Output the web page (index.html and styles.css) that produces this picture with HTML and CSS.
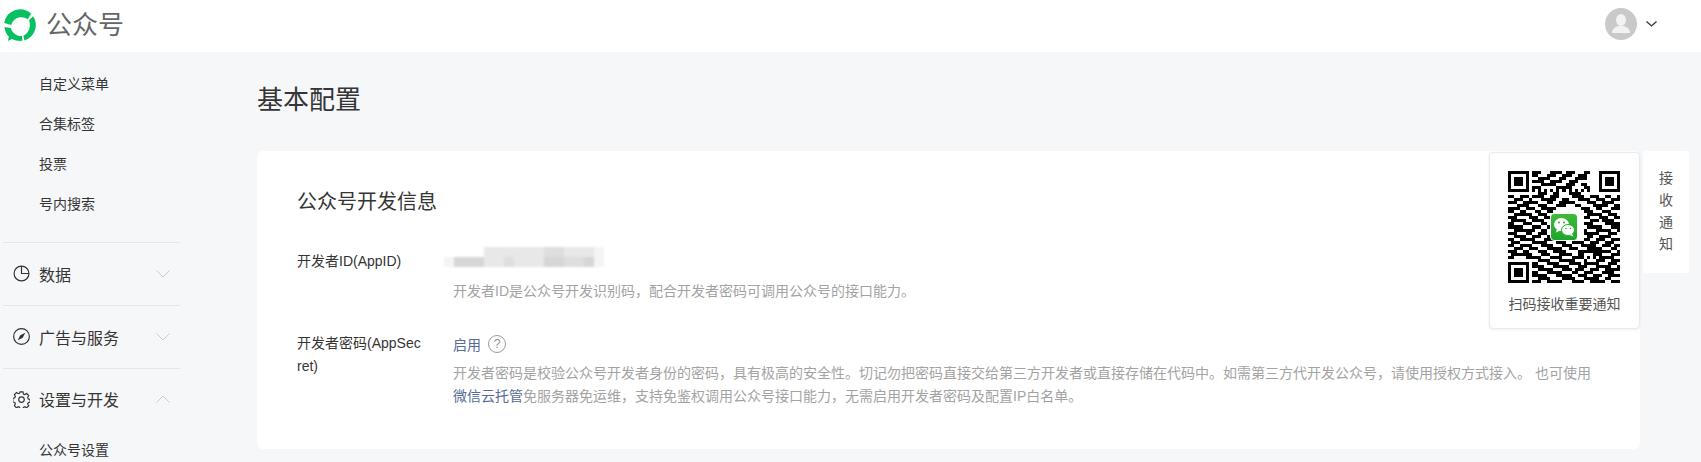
FILE: index.html
```html
<!DOCTYPE html>
<html lang="zh-CN">
<head>
    <meta charset="UTF-8">
    <meta name="viewport" content="width=device-width, initial-scale=1.0">
    <title>基本配置</title>
    <link rel="stylesheet" href="styles.css">
</head>
<body>
    <header class="topbar">
        <div class="brand">
            <svg class="brand-logo" viewBox="0 0 35 35" fill="#07c160">
                <path d="M1.300 15.500A16.500 16.500 0 0 1 29 6L25.500 11.500C22 9 17 8.700 13.500 10.800 11 12.300 9.300 14.500 8.500 17.500Z"/>
                <path d="M31 8.500A16.500 16.500 0 0 1 22 33.500L21 28.500C24 27 26 24.500 27 21.500 28 18.500 27.800 15 26.800 12.500Z"/>
                <path d="M1.500 19.500 8 20.500C9 24 11.500 27 15 28.300 16.500 28.800 18 29 19.500 28.800L20 33.800C16.500 34.300 12.500 33.500 9 32L5 34l1-4.500C3.500 27 2 23.500 1.500 19.500Z"/>
            </svg>
            <span class="brand-name">公众号</span>
        </div>
        <div class="account">
            <svg class="avatar" viewBox="0 0 32 32">
                <circle cx="16" cy="16" r="16" fill="#c9c9c9"/>
                <ellipse cx="16" cy="12" rx="5" ry="6" fill="#f2f2f2"/>
                <path fill="#f2f2f2" d="M7 25c0-4 3-6 6-7h6c3 1 6 3 6 7Z"/>
            </svg>
            <svg class="account-arrow" viewBox="0 0 11 6"><path d="M.5.500 5.500 5l5-4.500" fill="none" stroke="#333" stroke-width="1.300"/></svg>
        </div>
    </header>

    <div class="layout">
        <nav class="sidebar">
            <a class="nav-sub">自定义菜单</a>
            <a class="nav-sub">合集标签</a>
            <a class="nav-sub">投票</a>
            <a class="nav-sub">号内搜索</a>

            <div class="nav-group first">
                <svg class="nav-icon" viewBox="0 0 16 16" fill="none" stroke="#333" stroke-width="1.100">
                    <circle cx="8" cy="8" r="7"/>
                    <path d="M8 1v7h7"/>
                </svg>
                <span class="nav-label">数据</span>
                <svg class="nav-arrow" viewBox="0 0 14 8"><path d="M.5.500 7 7 13.500.500" fill="none" stroke="#cbcbcb"/></svg>
            </div>
            <div class="nav-group">
                <svg class="nav-icon" viewBox="0 0 16 16" fill="none" stroke="#333" stroke-width="1.100">
                    <circle cx="8" cy="8" r="7.400"/>
                    <path fill="#333" stroke="none" d="M11.500 4.500 9.200 9.200 4.500 11.500 6.800 6.800Z"/>
                </svg>
                <span class="nav-label">广告与服务</span>
                <svg class="nav-arrow" viewBox="0 0 14 8"><path d="M.5.500 7 7 13.500.500" fill="none" stroke="#cbcbcb"/></svg>
            </div>
            <div class="nav-group">
                <svg class="nav-icon" viewBox="0 0 16 16" fill="none" stroke="#333" stroke-width="1.100">
                    <path d="M6.600.800h2.800l.4 2 1.300.6 1.800-1 1.900 2-1 1.800.6 1.300 1.700.5v2.400l-1.800.6-.5 1.300 1 1.700-2 1.800-1.700-1-1.300.6-.5 1.700H6.700l-.5-1.800-1.300-.5-1.700 1-1.900-2 .9-1.700-.5-1.300-1.900-.5V7l1.900-.6.5-1.300-.9-1.700 2-1.900 1.700 1 1.300-.6Z"/>
                    <circle cx="8" cy="8.100" r="2.600"/>
                </svg>
                <span class="nav-label">设置与开发</span>
                <svg class="nav-arrow" viewBox="0 0 14 8"><path d="M.5 7.500 7 1l6.500 6.500" fill="none" stroke="#cbcbcb"/></svg>
            </div>
            <a class="nav-sub">公众号设置</a>
        </nav>

        <main class="content">
            <h2 class="page-title">基本配置</h2>
            <section class="card">
                <h3 class="card-title">公众号开发信息</h3>

                <div class="field">
                    <div class="field-label">开发者ID(AppID)</div>
                    <div class="field-body">
                        <div class="field-value masked">
                            <div class="mosaic">
                                <div class="mosaic-row top">
                                    <i class="m1"></i><i class="m1"></i><i class="m1"></i><i class="m1"></i><i class="m1"></i><i class="m1"></i><i class="m2"></i><i class="m2"></i><i class="m1"></i><i class="m1"></i><i class="m1"></i><i class="m0"></i>
                                </div>
                                <div class="mosaic-row">
                                    <i class="m0"></i><i class="m3"></i><i class="m3"></i><i class="m3"></i><i class="m1"></i><i class="m1"></i><i class="m2"></i><i class="m1"></i><i class="m1"></i><i class="m1"></i><i class="m3"></i><i class="m3"></i><i class="m2"></i><i class="m2"></i><i class="m3"></i><i class="m0"></i>
                                </div>
                            </div>
                        </div>
                        <p class="field-desc">开发者ID是公众号开发识别码，配合开发者密码可调用公众号的接口能力。</p>
                    </div>
                </div>

                <div class="field">
                    <div class="field-label">开发者密码(AppSecret)</div>
                    <div class="field-body">
                        <div class="field-value">
                            <a class="link">启用</a>
                            <span class="help">?</span>
                        </div>
                        <p class="field-desc">开发者密码是校验公众号开发者身份的密码，具有极高的安全性。切记勿把密码直接交给第三方开发者或直接存储在代码中。如需第三方代开发公众号，请使用授权方式接入。 也可使用<a class="link">微信云托管</a>免服务器免运维，支持免鉴权调用公众号接口能力，无需启用开发者密码及配置IP白名单。</p>
                    </div>
                </div>
            </section>
        </main>
    </div>

    <aside class="notice">
        <div class="qr-panel">
            <div class="qr-code">
                <svg class="qr-grid" viewBox="0 0 37 37" shape-rendering="crispEdges"><path id="qrPath" fill="#000"/></svg>
                <span class="qr-logo">
                    <svg viewBox="0 0 26 26">
                        <ellipse cx="10.500" cy="10.500" rx="7.500" ry="6.500" fill="#fff"/>
                        <path d="M6 15l-1 3.500 4-2Z" fill="#fff"/>
                        <ellipse cx="17" cy="16" rx="6.500" ry="5.500" fill="#fff" stroke="#2aae35" stroke-width="1"/>
                        <path d="M21 20l1.500 2.500-4-1.500Z" fill="#fff"/>
                        <circle cx="8" cy="8.500" r="1" fill="#2aae35"/>
                        <circle cx="13" cy="8.500" r="1" fill="#2aae35"/>
                        <circle cx="15" cy="14.500" r=".8" fill="#2aae35"/>
                        <circle cx="19.500" cy="14.500" r=".8" fill="#2aae35"/>
                    </svg>
                </span>
            </div>
            <p class="qr-caption">扫码接收重要通知</p>
        </div>
        <div class="notice-tab">接<br>收<br>通<br>知</div>
    </aside>

    <script src="qr.js"></script>
</body>
</html>
```

FILE: styles.css
```css
* {
    box-sizing: border-box;
}
html, body {
    height: 100%;
}
body {
    margin: 0;
    overflow: hidden;
    position: relative;
    font-family: "Liberation Sans", "Noto Sans CJK SC", sans-serif;
    font-size: 14px;
    color: #353535;
    background-color: #f6f7f9;
}

/* top bar */
.topbar {
    height: 52px;
    background: #fff;
    display: flex;
    align-items: center;
    justify-content: space-between;
    padding: 0 44px 0 3px;
}
.brand {
    display: flex;
    align-items: center;
    margin-top: -3px;
}
.brand-logo {
    width: 34px;
    height: 34px;
}
.brand-name {
    margin-left: 9px;
    font-size: 26px;
    line-height: 34px;
    color: #666;
}
.account {
    display: flex;
    align-items: center;
    margin-top: -4px;
}
.avatar {
    width: 32px;
    height: 32px;
}
.account-arrow {
    width: 11px;
    height: 6px;
    margin-left: 9px;
}

.layout {
    display: flex;
}

/* left nav */
.sidebar {
    width: 257px;
    flex-shrink: 0;
    padding: 12px 77px 0 3px;
}
.nav-sub {
    display: block;
    height: 40px;
    line-height: 40px;
    padding-left: 36px;
}
.nav-group {
    height: 63px;
    border-top: 1px solid #e4e6e9;
    display: flex;
    align-items: center;
    padding: 0 10px 1px;
    font-size: 16px;
}
.nav-group.first {
    margin-top: 18px;
}
.nav-group:last-of-type {
    height: 62px;
}
.nav-icon {
    width: 17px;
    height: 17px;
    flex-shrink: 0;
}
.nav-label {
    margin-left: 9px;
    flex: 1;
}
.nav-arrow {
    width: 14px;
    height: 8px;
}

/* main */
.content {
    flex: 1;
    padding: 30px 61px 0 0;
}
.page-title {
    margin: 0 0 33px;
    font-size: 26px;
    line-height: 36px;
    font-weight: 400;
}
.card {
    height: 298px;
    background: #fff;
    border-radius: 6px;
    padding: 36px 40px 40px;
}
.card-title {
    margin: 0 0 33px;
    font-size: 20px;
    line-height: 30px;
    font-weight: 400;
}
.field {
    display: flex;
    margin-bottom: 29px;
}
.field-label {
    width: 126px;
    margin-right: 30px;
    line-height: 23px;
    word-break: break-all;
    flex-shrink: 0;
}
.field-body {
    flex: 1;
}
.field-value {
    display: flex;
    align-items: center;
    height: 23px;
}
.field-value.masked {
    position: relative;
}
.field-desc {
    margin: 7px 0 0;
    line-height: 23px;
    color: #a3a3a3;
}
.link {
    color: #576b95;
}
.help {
    width: 18px;
    height: 18px;
    margin-left: 7px;
    border: 1px solid #9a9a9a;
    border-radius: 50%;
    color: #9a9a9a;
    font-size: 13px;
    line-height: 16px;
    text-align: center;
}

/* blurred-out app id */
.mosaic {
    position: absolute;
    left: -9px;
    top: -3px;
    width: 160px;
    filter: blur(.8px);
}
.mosaic-row {
    display: flex;
    height: 10px;
}
.mosaic-row.top {
    padding-left: 40px;
}
.mosaic-row i {
    width: 10px;
    height: 10px;
}
.m0 { background: #f4f4f4; }
.m1 { background: #e8e8e8; }
.m2 { background: #dedede; }
.m3 { background: #d6d6d6; }

/* qr popover */
.notice {
    position: absolute;
    top: 151px;
    right: 12px;
    display: flex;
    align-items: flex-start;
    gap: 3px;
}
.qr-panel {
    width: 151px;
    height: 177px;
    margin-top: 1px;
    background: #fff;
    border: 1px solid #e9eaec;
    border-radius: 4px;
    box-shadow: 0 1px 3px rgba(0, 0, 0, .06);
    padding: 18px 18px 0;
}
.qr-code {
    position: relative;
    width: 112px;
    height: 112px;
}
.qr-grid {
    display: block;
    width: 112px;
    height: 112px;
}
.qr-logo {
    position: absolute;
    left: 42px;
    top: 42px;
    width: 28px;
    height: 28px;
    border: 1px solid #fff;
    border-radius: 4px;
    background: linear-gradient(#3fbb3c, #1fa52c);
}
.qr-logo svg {
    display: block;
    width: 100%;
    height: 100%;
}
.qr-caption {
    margin: 10px -10px 0;
    text-align: center;
    line-height: 22px;
    color: #555;
}
.notice-tab {
    width: 46px;
    height: 122px;
    background: #fff;
    border-radius: 2px;
    padding-top: 16px;
    text-align: center;
    line-height: 22px;
    color: #555;
}
```

FILE: qr.js
```js
// data modules, roughly as in the reference; finder squares get stamped on below
var rows = [
    "0000000011100011110111000110000000000",
    "0000000011000111001110011100000000000",
    "0000000000111100011000111100000000000",
    "0000000011110011110011100000000000000",
    "0000000000011111000111001100000000000",
    "0000000011100000111110000110000000000",
    "0000000010101010101010101010000000000",
    "0000000000111001100011110000000000000",
    "1100111011110011100001111001110011001",
    "0011100100011111001100011110011100111",
    "1110011111000110011111000011100111100",
    "0001111000111000111000110000111110011",
    "1111001110011111000000001110011000111",
    "1100110001100110000000000111000111000",
    "0011111100111000000000000011111001110",
    "1110000111001100000000000110001110011",
    "0111110011110000000000000001110111100",
    "1100011100011000000000000111000011111",
    "1111100011100100000000000011111000111",
    "0011111110011000000000000100011111001",
    "1110001100111000000000000111110001110",
    "0011110011100110000000000011001111000",
    "1100111110001111100111000110011100111",
    "0111000011111000111001111001110011100",
    "1100111100011110001110001111100111011",
    "0011100111000111110011100011111000110",
    "1110011000111001111000011111111111001",
    "0111111100011100011110011000111000111",
    "1100001111100011110001111010101111100",
    "0000000000111100011111000100011100111",
    "0000000011000111100011110111110001110",
    "0000000011110001111100011100011111001",
    "0000000000111110001110111001110011111",
    "0000000011000111110001100111000111100",
    "0000000011111000111110011100111001111",
    "0000000000111100001111000111110011000",
    "0000000011100111110001111001111100111"
];

var grid = rows.map(function (row) { return row.split(""); });

function finder(left, top) {
    for (var y = 0; y < 7; y++) {
        for (var x = 0; x < 7; x++) {
            var ring = x === 0 || x === 6 || y === 0 || y === 6;
            var core = x >= 2 && x <= 4 && y >= 2 && y <= 4;
            grid[top + y][left + x] = ring || core ? "1" : "0";
        }
    }
}
finder(0, 0);
finder(30, 0);
finder(0, 30);

// one small square per dark module, 37 x 37
var d = "";
grid.forEach(function (row, y) {
    row.forEach(function (cell, x) {
        if (cell === "1") {
            d += "M" + x + " " + y + "h1v1h-1z";
        }
    });
});
document.getElementById("qrPath").setAttribute("d", d);
```
